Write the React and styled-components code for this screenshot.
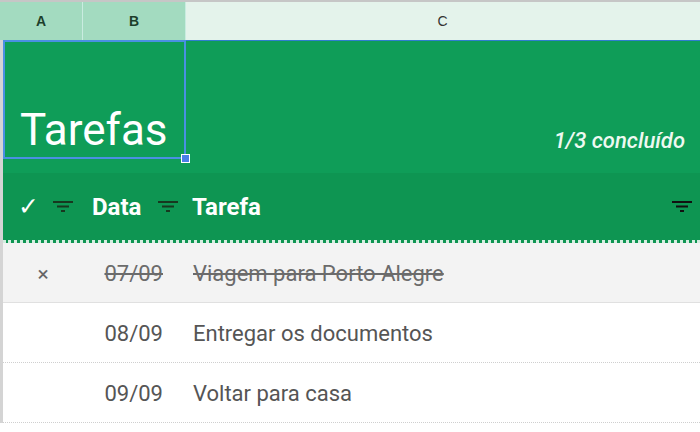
import React from 'react';
import styled, { createGlobalStyle } from 'styled-components';

const GlobalStyle = createGlobalStyle`
  html, body {
    margin: 0;
    padding: 0;
    background: #fff;
    overflow: hidden;
  }
  body {
    font-family: Roboto, "Liberation Sans", Arial, sans-serif;
  }
`;

const HEAD_COLS = '83px 103px 1fr';
const COLS = '80px 103px 1fr';

const Sheet = styled.div`
  position: relative;
  width: 700px;
  height: 432px;
  overflow: hidden;
`;

const ColHeaders = styled.div`
  display: grid;
  grid-template-columns: ${HEAD_COLS};
  height: 40px;
  border-top: 2px solid #c6c6c6;
  box-sizing: border-box;
  background: #e4f3eb;
`;

const ColHead = styled.div`
  display: flex;
  align-items: center;
  justify-content: center;
  font-family: "Liberation Sans", Arial, sans-serif;
  font-size: 14px;
  font-weight: ${p => (p.$active ? 700 : 400)};
  color: ${p => (p.$active ? '#1d3f2c' : '#333')};
  background: ${p => (p.$active ? '#a3dbc0' : '#e4f3eb')};
  border-right: 1px solid ${p => (p.$active ? '#c9ece0' : 'transparent')};
`;

const Body = styled.div`
  border-left: 3px solid #d4d4d4;
`;

const TitleRow = styled.div`
  display: grid;
  grid-template-columns: ${COLS};
  height: 133px;
  background: #0f9d58;
  border-top: 1px solid #2f7dd0;
  box-sizing: border-box;
`;

const TitleCell = styled.div`
  grid-column: 1 / span 2;
  display: flex;
  align-items: flex-end;
  padding: 0 0 21px 17px;
  font-size: 44px;
  color: #ffffff;
  line-height: 1;
`;

const Summary = styled.div`
  display: flex;
  align-items: flex-end;
  justify-content: flex-end;
  padding: 0 15px 21px 0;
  font-size: 22px;
  font-style: italic;
  font-weight: 500;
  color: #eef9f1;
  line-height: 1;
`;

const Selection = styled.div`
  position: absolute;
  left: 3px;
  top: 40px;
  width: 183px;
  height: 119px;
  border: 2px solid #4a90e2;
  box-sizing: border-box;
  pointer-events: none;
`;

const Handle = styled.div`
  position: absolute;
  right: -6px;
  bottom: -6px;
  width: 7px;
  height: 7px;
  background: #4a7fe8;
  border: 1px solid #ffffff;
`;

const HeaderRow = styled.div`
  display: grid;
  grid-template-columns: ${COLS};
  height: 70px;
  background: #0e9552;
  border-bottom: 3px dotted #d6ede1;
  box-sizing: border-box;
`;

const HeadCell = styled.div`
  display: flex;
  align-items: center;
  justify-content: space-between;
  padding: 0 ${p => p.$pr}px 0 ${p => p.$pl}px;
  color: #ffffff;
  font-size: 24px;
  font-weight: 700;
`;

const Check = styled.span`
  font-family: "DejaVu Sans", sans-serif;
  font-size: 25px;
  font-weight: 700;
`;

const FilterIcon = ({ color = '#17381f' }) => (
  <svg width="20" height="12" viewBox="0 0 20 12">
    <rect x="0" y="0" width="20" height="2" fill={color} />
    <rect x="4" y="4.5" width="12" height="2" fill={color} />
    <rect x="8" y="9" width="4" height="2" fill={color} />
  </svg>
);

const Row = styled.div`
  display: grid;
  grid-template-columns: ${COLS};
  height: 60px;
  padding-top: 2px;
  background: ${p => (p.$done ? '#f3f3f3' : '#ffffff')};
  border-bottom: ${p => (p.$done ? '1px solid #e0e0e0' : '1px dotted #cfcfcf')};
  box-sizing: border-box;
  color: ${p => (p.$done ? '#6b6b6b' : '#555555')};
  font-size: 22px;
`;

const Cell = styled.div`
  display: flex;
  align-items: center;
  justify-content: ${p => p.$align || 'flex-start'};
  padding: ${p => p.$pad || '0'};
  text-decoration: ${p => (p.$strike ? 'line-through' : 'none')};
  white-space: nowrap;
`;

const Cross = styled.span`
  font-size: 21px;
  color: #666;
`;

const tasks = [
  { date: '07/09', text: 'Viagem para Porto Alegre', done: true },
  { date: '08/09', text: 'Entregar os documentos', done: false },
  { date: '09/09', text: 'Voltar para casa', done: false },
];

export default function App() {
  const doneCount = tasks.filter(t => t.done).length;
  return (
    <Sheet>
      <GlobalStyle />
      <ColHeaders>
        <ColHead $active>A</ColHead>
        <ColHead $active>B</ColHead>
        <ColHead>C</ColHead>
      </ColHeaders>
      <Body>
        <TitleRow>
          <TitleCell>Tarefas</TitleCell>
          <Summary>{doneCount}/{tasks.length} concluído</Summary>
        </TitleRow>
        <HeaderRow>
          <HeadCell $pl={15} $pr={10}>
            <Check>✓</Check>
            <FilterIcon />
          </HeadCell>
          <HeadCell $pl={9} $pr={8}>
            Data
            <FilterIcon />
          </HeadCell>
          <HeadCell $pl={6} $pr={8}>
            Tarefa
            <FilterIcon color="#111" />
          </HeadCell>
        </HeaderRow>
        {tasks.map(t => (
          <Row key={t.date} $done={t.done}>
            <Cell $align="center">
              {t.done && <Cross>×</Cross>}
            </Cell>
            <Cell $align="flex-end" $pad="0 23px 0 0" $strike={t.done}>
              {t.date}
            </Cell>
            <Cell $pad="0 0 0 7px" $strike={t.done}>
              {t.text}
            </Cell>
          </Row>
        ))}
      </Body>
      <Selection>
        <Handle />
      </Selection>
    </Sheet>
  );
}
